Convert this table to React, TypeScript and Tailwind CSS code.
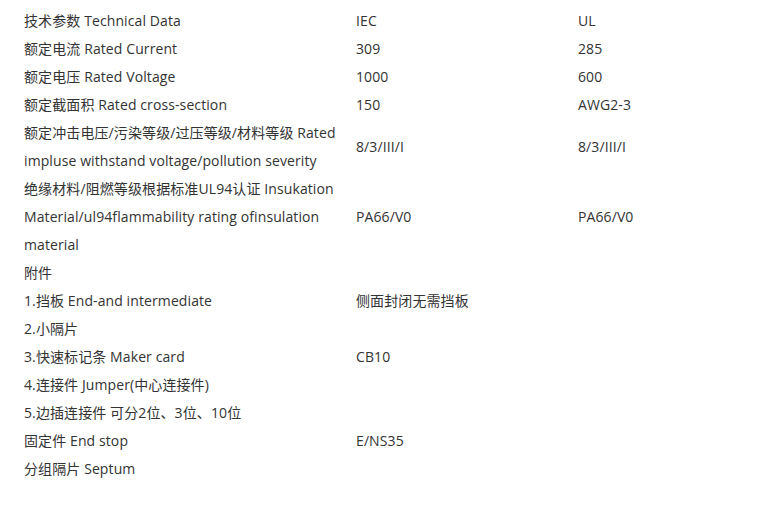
import React from 'react';

type Row = { label: React.ReactNode; iec?: string; ul?: string };

const rows: Row[] = [
  { label: '技术参数 Technical Data', iec: 'IEC', ul: 'UL' },
  { label: '额定电流 Rated Current', iec: '309', ul: '285' },
  { label: '额定电压 Rated Voltage', iec: '1000', ul: '600' },
  { label: '额定截面积 Rated cross-section', iec: '150', ul: 'AWG2-3' },
  {
    label: (
      <>
        额定冲击电压/污染等级/过压等级/材料等级 Rated
        <br />
        impluse withstand voltage/pollution severity
      </>
    ),
    iec: '8/3/III/I',
    ul: '8/3/III/I',
  },
  {
    label: (
      <>
        绝缘材料/阻燃等级根据标准UL94认证 Insukation
        <br />
        Material/ul94flammability rating ofinsulation
        <br />
        material
      </>
    ),
    iec: 'PA66/V0',
    ul: 'PA66/V0',
  },
  { label: '附件' },
  { label: '1.挡板 End-and intermediate', iec: '侧面封闭无需挡板' },
  { label: '2.小隔片' },
  { label: '3.快速标记条 Maker card', iec: 'CB10' },
  { label: '4.连接件 Jumper(中心连接件)' },
  { label: '5.边插连接件 可分2位、3位、10位' },
  { label: '固定件 End stop', iec: 'E/NS35' },
  { label: '分组隔片 Septum' },
];

export default function App() {
  return (
    <div
      className="w-[782px] h-[507px] bg-white pt-[7px] pl-[24px] text-[14px] leading-[28px] text-[#333333] tracking-[0.1px]"
      style={{ fontFamily: '"Open Sans", "Noto Sans CJK SC", sans-serif' }}
    >
      <table className="border-collapse">
        <tbody>
          {rows.map((r, i) => (
            <tr key={i}>
              <td className="w-[332px] p-0 align-middle">{r.label}</td>
              <td className="w-[222px] p-0 align-middle">{r.iec}</td>
              <td className="w-[180px] p-0 align-middle">{r.ul}</td>
            </tr>
          ))}
        </tbody>
      </table>
    </div>
  );
}
